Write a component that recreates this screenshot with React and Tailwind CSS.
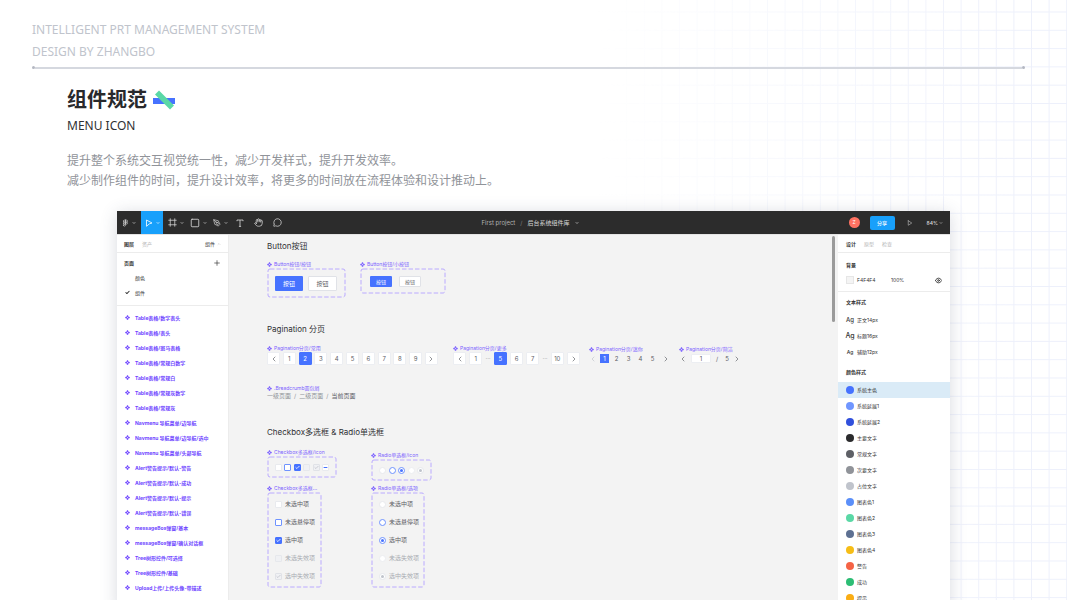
import clsx from 'clsx';
import { FiChevronDown, FiChevronUp, FiChevronLeft, FiChevronRight, FiFigma, FiPlus, FiCheck, FiEye, FiPlay, FiSquare, FiMinus } from 'react-icons/fi';
import { Frame, PenTool, Hand, MessageCircle } from 'lucide-react';

const COMPONENTS = [
  'Table表格/数字表头',
  'Table表格/表头',
  'Table表格/斑马表格',
  'Table表格/常规白数字',
  'Table表格/常规白',
  'Table表格/常规灰数字',
  'Table表格/常规灰',
  'Navmenu 导航菜单/边导航',
  'Navmenu 导航菜单/边导航/选中',
  'Navmenu 导航菜单/头部导航',
  'Alert警告提示/默认-警告',
  'Alert警告提示/默认-成功',
  'Alert警告提示/默认-提示',
  'Alert警告提示/默认-错误',
  'messageBox弹窗/基本',
  'messageBox弹窗/确认对话框',
  'Tree树形控件/可选择',
  'Tree树形控件/基础',
  'Upload上传/上传头像-带描述',
  'Input输入框/默认',
];

const TEXT_STYLES = [
  { name: '正文14px', size: 'text-[6px]' },
  { name: '标题16px', size: 'text-[7px]' },
  { name: '辅助12px', size: 'text-[5px]' },
];

const COLOR_STYLES = [
  { name: '系统主色', dot: 'bg-[#4672ff]', active: true },
  { name: '系统延展1', dot: 'bg-[#7096ff]' },
  { name: '系统延展2', dot: 'bg-[#3150dc]' },
  { name: '主要文字', dot: 'bg-[#2b2b2d]' },
  { name: '常规文字', dot: 'bg-[#5e6066]' },
  { name: '次要文字', dot: 'bg-[#909399]' },
  { name: '占位文字', dot: 'bg-[#c0c4cc]' },
  { name: '图表色1', dot: 'bg-[#5b8ff9]' },
  { name: '图表色2', dot: 'bg-[#5ad8a6]' },
  { name: '图表色3', dot: 'bg-[#5d7092]' },
  { name: '图表色4', dot: 'bg-[#f6bd16]' },
  { name: '警告', dot: 'bg-[#f56345]' },
  { name: '成功', dot: 'bg-[#2cbd74]' },
  { name: '提示', dot: 'bg-[#faad14]' },
];

const CHOICES = [
  { label: '未选中项', state: 'off' },
  { label: '未选悬停项', state: 'hover' },
  { label: '选中项', state: 'on' },
  { label: '未选失效项', state: 'disabled' },
  { label: '选中失效项', state: 'disabledOn' },
];

const BOX_STYLE = {
  off: 'bg-white border-[#e8eaee]',
  hover: 'bg-white border-[#6f93ff]',
  on: 'bg-[#4672ff] border-[#4672ff]',
  disabled: 'bg-[#f0f1f4] border-[#e6e8ec]',
  disabledOn: 'bg-[#f0f1f4] border-[#e0e2e7]',
  mixed: 'bg-white border-[#e8eaee]',
};

const RADIO_STYLE = {
  off: 'bg-white border-[#e8eaee]',
  hover: 'bg-white border-[#6f93ff]',
  on: 'bg-white border-[#6f93ff]',
  disabled: 'bg-white border-[#eceef1]',
  disabledOn: 'bg-white border-[#e6e8ec]',
};

const GridBackdrop = () => (
  <svg className="absolute inset-0 -z-10 w-full h-full" aria-hidden="true">
    <defs>
      <pattern id="grid" x="10.2" y="11.5" width="17.6" height="18.3" patternUnits="userSpaceOnUse">
        <path d="M0 .5H17.6M.5 0V18.3" stroke="#edf0fb" fill="none" />
      </pattern>
      <linearGradient id="fade" x1="0.56" x2="0.95" y1="0" y2="0">
        <stop offset="0" stopColor="#fff" stopOpacity="0" />
        <stop offset="1" stopColor="#fff" />
      </linearGradient>
      <mask id="gridMask">
        <rect width="100%" height="100%" fill="url(#fade)" />
      </mask>
    </defs>
    <rect width="100%" height="100%" fill="url(#grid)" mask="url(#gridMask)" />
  </svg>
);

const BrandMark = () => (
  <svg viewBox="0 0 24 20" className="w-6 h-5" aria-hidden="true">
    <rect x="1" y="8" width="22" height="6" fill="#4672ff" />
    <path d="M7 .5 22 15.5 18 19.5 3 4.5Z" fill="#5ad8a6" />
  </svg>
);

const CursorIcon = () => (
  <svg viewBox="0 0 8 8" className="w-2 h-2" fill="none" stroke="currentColor" strokeWidth="0.8" strokeLinejoin="round">
    <path d="M1.5 1 7 4 4.3 4.9 1.5 7.3Z" />
  </svg>
);

const TextIcon = () => (
  <svg viewBox="0 0 8 8" className="w-2 h-2" fill="none" stroke="currentColor" strokeWidth="0.8">
    <path d="M1 2.2V1H7V2.2M4 1V7.4M2.9 7.4H5.1" />
  </svg>
);

// four small diamonds around an empty centre
const ComponentIcon = ({ className }) => (
  <svg viewBox="0 0 12 12" className={className} fill="currentColor" aria-hidden="true">
    <path d="M6 0 8.7 2.7 6 5.4 3.3 2.7ZM6 6.6 8.7 9.3 6 12 3.3 9.3ZM2.7 3.3 5.4 6 2.7 8.7 0 6ZM9.3 3.3 12 6 9.3 8.7 6.6 6Z" />
  </svg>
);

const Tool = ({ label, icon, menu, className }) => (
  <button aria-label={label} className={clsx('h-full flex items-center justify-center gap-[3px]', className)}>
    {icon}
    {menu && <FiChevronDown className="w-1 h-1" strokeWidth={4} />}
  </button>
);

const Toolbar = () => (
  <header className="grid grid-cols-[1fr_auto_1fr] items-center h-[23px] pr-[7px] bg-[#2c2c2c] text-[#d8d8d8]">
    <div className="flex h-full">
      <Tool label="Menu" menu className="w-6" icon={<FiFigma className="w-[7px] h-2" />} />
      <Tool label="Move" menu className="w-[22px] bg-[#18a0fb] text-white" icon={<CursorIcon />} />
      <Tool label="Frame" menu className="w-6 pl-px" icon={<Frame className="w-[9px] h-[9px]" />} />
      <Tool label="Shape" menu className="w-[22px]" icon={<FiSquare className="w-[10px] h-[10px]" />} />
      <Tool label="Pen" menu className="w-[22px]" icon={<PenTool className="w-2 h-2" />} />
      <Tool label="Text" className="w-[18px]" icon={<TextIcon />} />
      <Tool label="Hand" className="w-[19px]" icon={<Hand className="w-[9px] h-[9px]" />} />
      <Tool label="Comment" className="w-[19px]" icon={<MessageCircle className="w-[9px] h-[9px]" />} />
    </div>
    <div className="flex items-center gap-[5px] text-[6px] leading-2">
      <span className="text-[#b0b0b0]">First project</span>
      <span className="text-[#808080]">/</span>
      <span>后台系统组件库</span>
      <FiChevronDown className="w-1 h-1" strokeWidth={4} />
    </div>
    <div className="flex items-center justify-end">
      <span className="flex items-center justify-center w-[11px] h-[11px] mr-[10px] rounded-full bg-[#ff7262] text-white text-[5px]">Z</span>
      <button className="w-[25px] h-[14px] mr-3 rounded-xs bg-[#18a0fb] text-white text-[5px] leading-2 font-medium">分享</button>
      <button aria-label="Present" className="mr-[14px]">
        <FiPlay className="w-[6px] h-[6px]" />
      </button>
      <button className="flex items-center gap-px text-[5px] leading-2 font-medium">
        84% <FiChevronDown className="w-1 h-1" strokeWidth={3} />
      </button>
    </div>
  </header>
);

const LayersPanel = () => (
  <aside className="w-28 shrink-0 bg-white border-r border-[#ececec] text-[5px] leading-2 text-[#333]">
    <div className="flex items-center h-[18px] px-[7px] border-b border-[#ececec]">
      <button className="mr-2 font-bold">图层</button>
      <button className="text-[#b3b3b3]">资产</button>
      <button className="ml-auto flex items-center gap-[2px]">
        组件 <FiChevronUp className="w-1 h-1 text-[#999]" />
      </button>
    </div>
    <div className="pt-[2px] pb-[5px] border-b border-[#ececec]">
      <div className="flex items-center justify-between h-[15px] px-[7px]">
        <h3 className="font-bold">页面</h3>
        <button aria-label="Add page"><FiPlus className="w-2 h-2" /></button>
      </div>
      <div className="flex items-center h-[15px] pl-[18px]">颜色</div>
      <div className="flex items-center gap-[5px] h-[15px] pl-2">
        <FiCheck className="w-[5px] h-[5px]" strokeWidth={5} />
        组件
      </div>
    </div>
    <ul className="pt-1">
      {COMPONENTS.map((name) => (
        <li key={name} className="flex items-center gap-[5px] h-[15px] pl-2 font-bold text-[#6e45ff] whitespace-nowrap">
          <ComponentIcon className="w-[5px] h-[5px]" />
          {name}
        </li>
      ))}
    </ul>
  </aside>
);

const DesignPanel = () => (
  <aside className="w-28 shrink-0 bg-white text-[5px] leading-2 text-[#333]">
    <div className="flex items-center gap-2 h-[18px] px-2 border-b border-[#ececec]">
      <button className="font-bold">设计</button>
      <button className="text-[#b3b3b3]">原型</button>
      <button className="text-[#b3b3b3]">检查</button>
    </div>
    <div className="h-[39px] px-2 pt-2 border-b border-[#ececec]">
      <h3 className="font-bold">背景</h3>
      <div className="flex items-center mt-[7px]">
        <span className="w-2 h-2 mr-[3px] bg-[#f4f4f4] border border-[#e6e6e6]" />
        <span className="w-[34px]">F4F4F4</span>
        <span>100%</span>
        <FiEye className="w-[7px] h-[7px] ml-auto" strokeWidth={3} />
      </div>
    </div>
    <h3 className="px-2 pt-[6px] pb-[6px] font-bold">文本样式</h3>
    <ul>
      {TEXT_STYLES.map((style) => (
        <li key={style.name} className="flex items-center gap-[3px] h-4 px-2">
          <span className={clsx('flex justify-center w-2 font-medium', style.size)}>Ag</span>
          {style.name}
        </li>
      ))}
    </ul>
    <h3 className="px-2 pt-2 pb-[6px] font-bold">颜色样式</h3>
    <ul>
      {COLOR_STYLES.map((color) => (
        <li key={color.name} className={clsx('flex items-center gap-[3px] h-4 px-2', color.active && 'bg-[#daebf7]')}>
          <span className={clsx('w-2 h-2 rounded-full', color.dot)} />
          {color.name}
        </li>
      ))}
    </ul>
  </aside>
);

const Group = ({ name, className, children }) => (
  <div className={className}>
    <p className="flex items-center gap-[2px] h-[7px] text-[5px] leading-[7px] text-[#7b61ff] whitespace-nowrap">
      <ComponentIcon className="w-[5px] h-[5px]" />
      {name}
    </p>
    {children}
  </div>
);

// component set frame, the outline needs longer dashes than a css border gives
const Dashed = ({ className, children }) => (
  <div className={clsx('relative p-px', className)}>
    <svg className="absolute inset-0 w-full h-full overflow-visible pointer-events-none p-px" aria-hidden="true">
      <rect width="100%" height="100%" rx="2" fill="none" stroke="#baaaff" strokeDasharray="4.5 2" />
    </svg>
    {children}
  </div>
);

const SectionTitle = ({ className, children }) => (
  <h2 className={clsx('text-[8px] leading-3 text-[#303133]', className)}>{children}</h2>
);

const PageButton = ({ active, label, children }) => (
  <button
    aria-label={label}
    className={clsx(
      'flex items-center justify-center w-[13px] h-[13px] border rounded-[1px]',
      active ? 'bg-[#4672ff] border-[#4672ff] text-white' : 'bg-white border-[#eceef2]'
    )}
  >
    {children}
  </button>
);

const Prev = () => <FiChevronLeft className="w-2 h-2" />;
const Next = () => <FiChevronRight className="w-2 h-2" />;

const CheckMark = ({ state, label }) => (
  <span className="relative w-[7px] h-[7px]">
    <input
      type="checkbox"
      aria-label={label}
      defaultChecked={state === 'on' || state === 'disabledOn'}
      disabled={state.startsWith('disabled')}
      className={clsx('block appearance-none w-[7px] h-[7px] border rounded-[1px]', BOX_STYLE[state])}
    />
    {state === 'on' && <FiCheck className="absolute inset-px w-[5px] h-[5px] text-white" strokeWidth={4} />}
    {state === 'disabledOn' && <FiCheck className="absolute inset-px w-[5px] h-[5px] text-[#b4b7bf]" strokeWidth={3} />}
    {state === 'mixed' && <FiMinus className="absolute inset-px w-[5px] h-[5px] text-[#4672ff]" strokeWidth={5} />}
  </span>
);

const RadioMark = ({ state, name, label }) => (
  <span className="relative w-[7px] h-[7px]">
    <input
      type="radio"
      name={name}
      aria-label={label}
      defaultChecked={state === 'on'}
      disabled={state.startsWith('disabled')}
      className={clsx('block appearance-none w-[7px] h-[7px] border rounded-full', RADIO_STYLE[state])}
    />
    {state === 'on' && <span className="absolute inset-[2px] rounded-full bg-[#4672ff]" />}
    {state === 'disabledOn' && <span className="absolute inset-[2px] rounded-full bg-[#c0c4cc]" />}
  </span>
);

const ChoiceList = ({ kind }) => (
  <>
    {CHOICES.map(({ label, state }) => (
      <label
        key={label}
        className={clsx(
          'flex items-center gap-[3px] h-[18px] text-[6px] leading-2 whitespace-nowrap',
          state.startsWith('disabled') ? 'text-[#a8abb2]' : 'text-[#5e6066]'
        )}
      >
        {kind === 'radio' ? <RadioMark state={state} name="option" label={label} /> : <CheckMark state={state} label={label} />}
        {label}
      </label>
    ))}
  </>
);

const Canvas = () => (
  <section className="relative flex-1 min-w-0 pt-[5px] pl-[38px] bg-[#f3f3f3]">
    <div className="absolute top-px right-[3px] w-[3px] h-[86px] rounded-full bg-[#9b9b9b]" />

    <SectionTitle>Button按钮</SectionTitle>
    <div className="flex items-start gap-[14px] mt-[9px] text-[#5e6066]">
      <Group name="Button按钮/按钮">
        <Dashed className="flex gap-[5px] w-[79px] h-[30px] pl-2 pt-2">
          <button className="w-7 h-[15px] bg-[#4672ff] rounded-[1px] text-white text-[6px] leading-2">按钮</button>
          <button className="w-[29px] h-[15px] bg-white border border-[#e0e2e7] rounded-[1px] text-[6px] leading-2">按钮</button>
        </Dashed>
      </Group>
      <Group name="Button按钮/小按钮">
        <Dashed className="flex gap-[7px] w-[86px] h-[26px] pl-[10px] pt-2">
          <button className="w-[22px] h-[11px] bg-[#4672ff] rounded-[1px] text-white text-[5px] leading-2">按钮</button>
          <button className="w-[22px] h-[11px] bg-white border border-[#e0e2e7] rounded-[1px] text-[5px] leading-2">按钮</button>
        </Dashed>
      </Group>
    </div>

    <SectionTitle className="mt-[25px]">Pagination 分页</SectionTitle>
    <div className="grid grid-cols-[186px_136px_90px_auto] justify-start items-start mt-[10px] text-[6px] leading-2 text-[#5e6066]">
      <Group name="Pagination分页/常用">
        <div className="flex justify-between w-[171px]">
          <PageButton label="Previous"><Prev /></PageButton>
          {[1, 2, 3, 4, 5, 6, 7, 8, 9].map((n) => (
            <PageButton key={n} active={n === 2}>{n}</PageButton>
          ))}
          <PageButton label="Next"><Next /></PageButton>
        </div>
      </Group>
      <Group name="Pagination分页/更多">
        <div className="flex items-center justify-between w-[127px]">
          <PageButton label="Previous"><Prev /></PageButton>
          <PageButton>1</PageButton>
          <span className="text-[#909399]">···</span>
          <PageButton active>5</PageButton>
          <PageButton>6</PageButton>
          <PageButton>7</PageButton>
          <span className="text-[#909399]">···</span>
          <PageButton>10</PageButton>
          <PageButton label="Next"><Next /></PageButton>
        </div>
      </Group>
      <Group name="Pagination分页/迷你" className="pt-px">
        <div className="flex items-center gap-[3px] h-[11px]">
          <button aria-label="Previous" className="w-2 text-[#c0c4cc]"><Prev /></button>
          {[1, 2, 3, 4, 5].map((n) => (
            <button key={n} className={clsx('flex items-center justify-center w-[9px] h-[9px]', n === 1 && 'bg-[#4672ff] text-white')}>{n}</button>
          ))}
          <button aria-label="Next" className="ml-[2px]"><Next /></button>
        </div>
      </Group>
      <Group name="Pagination分页/简洁" className="pt-px">
        <div className="flex items-center h-[11px]">
          <button aria-label="Previous" className="mr-1"><Prev /></button>
          <input aria-label="Page" defaultValue="1" className="w-5 h-[9px] bg-white border border-[#eceef2] rounded-[1px] text-center" />
          <span className="w-3 text-center">/</span>
          <span className="w-2 text-center">5</span>
          <button aria-label="Next" className="ml-[2px]"><Next /></button>
        </div>
      </Group>
    </div>

    <Group name=".Breadcrumb面包屑" className="mt-5">
      <nav className="flex gap-[3px] text-[6px] leading-2 text-[#909399]">
        <a href="#level-1">一级页面</a>
        <span>/</span>
        <a href="#level-2">二级页面</a>
        <span>/</span>
        <span className="text-[#5e6066]">当前页面</span>
      </nav>
    </Group>

    <SectionTitle className="mt-[26px]">Checkbox多选框 &amp; Radio单选框</SectionTitle>
    <div className="grid grid-cols-[104px_auto] justify-start items-start mt-[11px]">
      <div>
        <Group name="Checkbox多选框/icon">
          <Dashed className="flex items-center justify-between w-[70px] h-[22px] px-2">
            {['off', 'hover', 'on', 'disabled', 'disabledOn', 'mixed'].map((state) => (
              <CheckMark key={state} state={state} label={state} />
            ))}
          </Dashed>
        </Group>
        <Group name="Checkbox多选框..." className="mt-[7px]">
          <Dashed className="w-[55px] h-24 pl-2 pt-[3px]">
            <ChoiceList kind="checkbox" />
          </Dashed>
        </Group>
      </div>
      <div className="pt-[3px]">
        <Group name="Radio单选框/icon">
          <Dashed className="flex items-center justify-between w-[61px] h-[22px] px-2">
            {['off', 'hover', 'on', 'disabled', 'disabledOn'].map((state) => (
              <RadioMark key={state} state={state} name="icon" label={state} />
            ))}
          </Dashed>
        </Group>
        <Group name="Radio单选框/选项" className="mt-1">
          <Dashed className="w-[54px] h-24 pl-2 pt-[3px]">
            <ChoiceList kind="radio" />
          </Dashed>
        </Group>
      </div>
    </div>
  </section>
);

export default function App() {
  return (
    <main className="relative isolate h-screen overflow-hidden bg-white font-['Inter','Noto_Sans_CJK_SC',sans-serif]">
      <GridBackdrop />

      <div className="ml-8 mr-[42px] pt-[19px] font-['Noto_Sans','Noto_Sans_CJK_SC',sans-serif]">
        <p className="text-xs leading-[22px] text-[#c0c4cc]">
          INTELLIGENT PRT MANAGEMENT SYSTEM
          <br />
          DESIGN BY ZHANGBO
        </p>
        <div className="flex items-center mt-[3px]">
          <span className="w-[3px] h-[3px] rounded-full bg-[#b4b8c2]" />
          <span className="flex-1 h-[2px] bg-[#d5d8df]" />
          <span className="w-[3px] h-[3px] rounded-full bg-[#b4b8c2]" />
        </div>
      </div>

      <div className="mt-[15px] ml-[67px] font-['Noto_Sans','Noto_Sans_CJK_SC',sans-serif]">
        <h1 className="flex items-center gap-[5px] text-xl leading-8 font-bold text-[#28292c]">
          组件规范
          <BrandMark />
        </h1>
        <p className="text-xs leading-5 text-[#303133]">MENU ICON</p>
        <p className="mt-[15px] text-xs leading-5 text-[#909399]">
          提升整个系统交互视觉统一性，减少开发样式，提升开发效率。
          <br />
          减少制作组件的时间，提升设计效率，将更多的时间放在流程体验和设计推动上。
        </p>
      </div>

      <div className="mt-5 mx-[117px] shadow-[0_2px_16px_rgba(60,70,100,0.2)]">
        <Toolbar />
        <div className="flex border-t border-[#e4e4e4]">
          <LayersPanel />
          <Canvas />
          <DesignPanel />
        </div>
      </div>
    </main>
  );
}
